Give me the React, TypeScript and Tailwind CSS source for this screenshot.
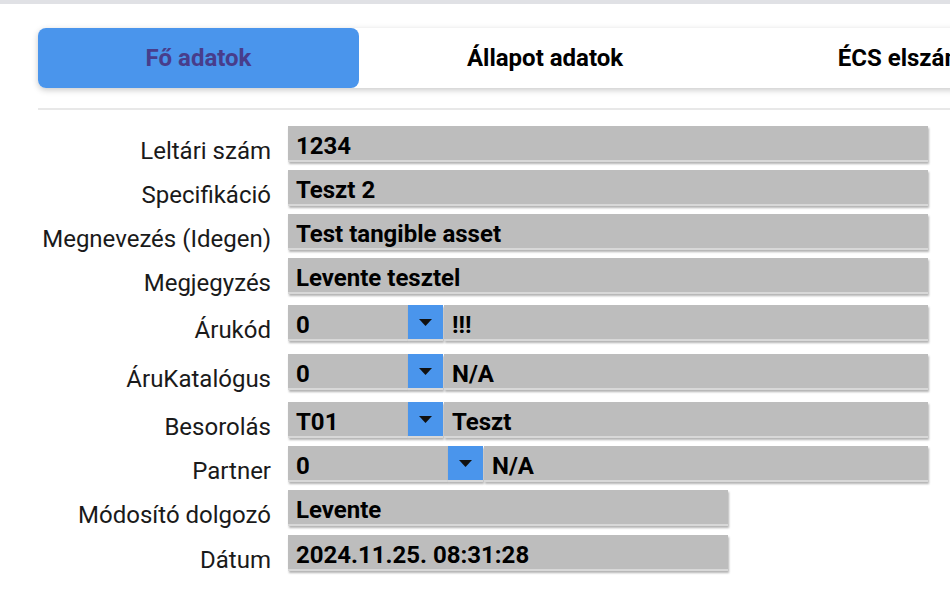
import React from 'react';

type Row = {
  label: string;
  kind: 'text' | 'combo';
  value: string;
  desc?: string;
  codeWidth?: string; // width class of the code box for combo rows
  fieldWidth: string;
  rowClass: string; // vertical pitch of the row
};

const rows: Row[] = [
  { label: 'Leltári szám', kind: 'text', value: '1234', fieldWidth: 'w-[640px]', rowClass: 'h-[44px]' },
  { label: 'Specifikáció', kind: 'text', value: 'Teszt 2', fieldWidth: 'w-[640px]', rowClass: 'h-[44px]' },
  { label: 'Megnevezés (Idegen)', kind: 'text', value: 'Test tangible asset', fieldWidth: 'w-[640px]', rowClass: 'h-[44px]' },
  { label: 'Megjegyzés', kind: 'text', value: 'Levente tesztel', fieldWidth: 'w-[640px]', rowClass: 'h-[47px]' },
  { label: 'Árukód', kind: 'combo', value: '0', desc: '!!!', codeWidth: 'w-[120px]', fieldWidth: 'w-[640px]', rowClass: 'h-[49px]' },
  { label: 'ÁruKatalógus', kind: 'combo', value: '0', desc: 'N/A', codeWidth: 'w-[120px]', fieldWidth: 'w-[640px]', rowClass: 'h-[48px]' },
  { label: 'Besorolás', kind: 'combo', value: 'T01', desc: 'Teszt', codeWidth: 'w-[120px]', fieldWidth: 'w-[640px]', rowClass: 'h-[44px]' },
  { label: 'Partner', kind: 'combo', value: '0', desc: 'N/A', codeWidth: 'w-[160px]', fieldWidth: 'w-[640px]', rowClass: 'h-[44px]' },
  { label: 'Módosító dolgozó', kind: 'text', value: 'Levente', fieldWidth: 'w-[440px]', rowClass: 'h-[45px]' },
  { label: 'Dátum', kind: 'text', value: '2024.11.25. 08:31:28', fieldWidth: 'w-[440px]', rowClass: 'h-[44px]' },
];

// grey read-only box with the light bottom line and soft drop shadow
const boxCls =
  'h-[36px] bg-[#bdbdbd] border-b-2 border-[#d8d8d8] shadow-[1px_2px_2px_rgba(0,0,0,0.3)]';

function DropButton() {
  return (
    <div className="h-[36px] w-[35px] shrink-0 bg-[#4a95ec] border-b-2 border-[#d8d8d8] shadow-[1px_2px_2px_rgba(0,0,0,0.3)] flex items-center justify-center">
      <svg width="13" height="7" viewBox="0 0 13 7">
        <path d="M0 0 L13 0 L6.5 7 Z" fill="#111" />
      </svg>
    </div>
  );
}

function Field({ row }: { row: Row }) {
  if (row.kind === 'text') {
    return (
      <div className={`${boxCls} ${row.fieldWidth} px-[8px] pt-[6px] leading-[28px] font-bold text-black whitespace-nowrap overflow-hidden`}>
        {row.value}
      </div>
    );
  }
  return (
    <div className={`${row.fieldWidth} flex`}>
      <div className={`${boxCls} ${row.codeWidth} shrink-0 px-[8px] pt-[6px] leading-[28px] font-bold text-black`}>
        {row.value}
      </div>
      <DropButton />
      <div className={`${boxCls} flex-1 ml-[1px] px-[8px] pt-[6px] leading-[28px] font-bold text-black whitespace-nowrap`}>
        {row.desc}
      </div>
    </div>
  );
}

export default function App() {
  const tabs = [
    { name: 'Fő adatok', width: 'w-[321px]', active: true },
    { name: 'Állapot adatok', width: 'w-[372px]', active: false },
    { name: 'ÉCS elszámolás', width: 'w-[386px]', active: false },
  ];

  return (
    <div className="w-[950px] h-[592px] overflow-hidden bg-white text-[24px] text-[#1a1a1a]" style={{ fontFamily: 'Roboto, "Noto Sans", sans-serif' }}>
      <div className="h-[4px] bg-[#e0e1e5]" />

      <div className="pl-[38px] pt-[24px]">
        {/* tab strip */}
        <div className="flex w-[1100px] h-[60px] bg-white rounded-[8px] shadow-[0_2px_6px_rgba(0,0,0,0.22)]">
          {tabs.map((t) =>
            t.active ? (
              <div key={t.name} className={`${t.width} shrink-0 h-full rounded-[8px] bg-[#4a95ec] text-[#483d8b] font-bold flex items-center justify-center`}>
                {t.name}
              </div>
            ) : (
              <div key={t.name} className={`${t.width} shrink-0 h-full text-black font-bold flex items-center justify-center whitespace-nowrap`}>
                {t.name}
              </div>
            )
          )}
        </div>

        <div className="mt-[20px] h-[2px] bg-[#e8e8e8]" />

        {/* form */}
        <div className="pt-[16px]">
          {rows.map((r) => (
            <div key={r.label} className={`${r.rowClass} flex items-start`}>
              <div className="w-[233px] shrink-0 text-right pt-[11px] leading-[28px] whitespace-nowrap">{r.label}</div>
              <div className="ml-[17px]">
                <Field row={r} />
              </div>
            </div>
          ))}
        </div>
      </div>
    </div>
  );
}
